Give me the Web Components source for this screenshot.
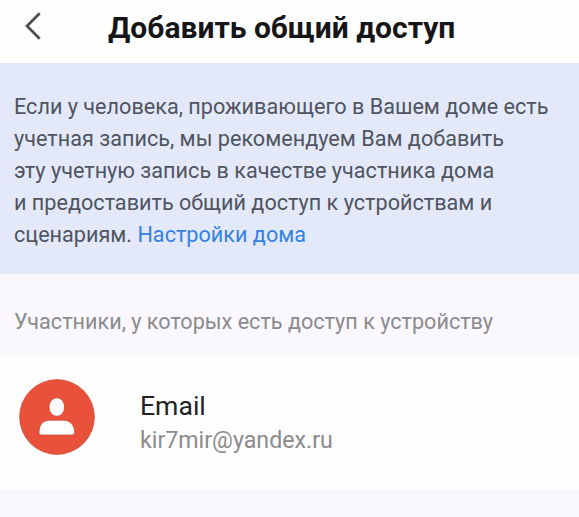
<!DOCTYPE html>
<html lang="ru">
<head>
<meta charset="utf-8">
<meta name="viewport" content="width=device-width, initial-scale=1">
<title>Добавить общий доступ</title>
<style>
  body{
    margin:0;
    background:#faf8fc;
    font-family:Roboto, "Liberation Sans", sans-serif;
  }
</style>
</head>
<body>
<share-page>
  <page-header slot="header">Добавить общий доступ</page-header>
  <info-banner>
    <text-line>Если у человека, проживающего в Вашем доме есть</text-line>
    <text-line>учетная запись, мы рекомендуем Вам добавить</text-line>
    <text-line>эту учетную запись в качестве участника дома</text-line>
    <text-line>и предоставить общий доступ к устройствам и</text-line>
    <text-line>сценариям. <home-link>Настройки дома</home-link></text-line>
  </info-banner>
  <section-title>Участники, у которых есть доступ к устройству</section-title>
  <member-row>
    <user-avatar slot="avatar"></user-avatar>
    <span slot="name">Email</span>
    <span slot="account">kir7mir@yandex.ru</span>
  </member-row>
</share-page>

<script>
class BaseElement extends HTMLElement{
  constructor(){
    super();
    this.attachShadow({mode:'open'});
  }
  getTemplate(){
    const content=document.createElement('template');
    content.innerHTML=`${this.getStyles()}${this.getMarkup()}`;
    return content;
  }
  getMarkup(){
    return `<slot></slot>`;
  }
  connectedCallback(){
    if(this.shadowRoot.childNodes.length) return;
    this.shadowRoot.appendChild(this.getTemplate().content.cloneNode(true));
  }
}

class SharePage extends BaseElement{
  getMarkup(){
    return `<slot name="header"></slot><main><slot></slot></main>`;
  }
  getStyles(){
    return `<style>
      :host{
        display:flex;
        flex-direction:column;
        min-height:517px;
      }
    </style>`;
  }
}

class PageHeader extends BaseElement{
  getMarkup(){
    return `
      <button aria-label="Назад">
        <svg width="18" height="30" viewBox="0 0 18 30">
          <path d="M15.7 2.2 L3 15 L15.7 27.8" fill="none" stroke="#4c4c4e" stroke-width="2.7"/>
        </svg>
      </button>
      <h1><slot></slot></h1>
    `;
  }
  getStyles(){
    return `<style>
      :host{
        display:flex;
        align-items:flex-start;
        box-sizing:border-box;
        height:63px;
        padding:11px 24px 0;
        background:#fefefe;
      }
      button{
        display:block;
        width:84px;
        padding:0;
        border:0;
        background:none;
        text-align:left;
      }
      svg{
        display:block;
      }
      h1{
        margin:0;
        font-size:30px;
        line-height:34px;
        font-weight:700;
        color:#161618;
        white-space:nowrap;
      }
    </style>`;
  }
}

class InfoBanner extends BaseElement{
  getStyles(){
    return `<style>
      :host{
        display:block;
        box-sizing:border-box;
        height:211px;
        padding:27.6px 14px 0;
        background:#e3e9f9;
        color:#50545f;
        font-size:21.63px;
        line-height:32.1px;
      }
    </style>`;
  }
}

class TextLine extends BaseElement{
  getStyles(){
    return `<style>
      :host{
        display:block;
        white-space:nowrap;
      }
    </style>`;
  }
}

class HomeLink extends BaseElement{
  getStyles(){
    return `<style>
      :host{
        display:inline;
        color:#3482e0;
        cursor:pointer;
      }
    </style>`;
  }
}

class SectionTitle extends BaseElement{
  getStyles(){
    return `<style>
      :host{
        display:block;
        box-sizing:border-box;
        height:83px;
        padding:34px 14px 0;
        color:#8b8a8d;
        font-size:21.62px;
        line-height:28px;
        white-space:nowrap;
      }
    </style>`;
  }
}

class MemberRow extends BaseElement{
  getMarkup(){
    return `
      <slot name="avatar"></slot>
      <div>
        <p class="name"><slot name="name"></slot></p>
        <p class="account"><slot name="account"></slot></p>
      </div>
    `;
  }
  getStyles(){
    return `<style>
      :host{
        display:flex;
        align-items:flex-start;
        gap:45px;
        box-sizing:border-box;
        height:133px;
        padding:22px 19px 0;
        background:#fefefe;
      }
      div{
        padding-top:10px;
      }
      p{
        margin:0;
        white-space:nowrap;
      }
      .name{
        font-size:26.6px;
        line-height:34px;
        color:#222224;
      }
      .account{
        font-size:23.2px;
        line-height:34px;
        color:#8b8b8d;
      }
    </style>`;
  }
}

class UserAvatar extends BaseElement{
  getMarkup(){
    return `
      <svg width="76" height="76" viewBox="0 0 76 76">
        <circle cx="38" cy="38" r="37.4" fill="#e9513a" stroke="#c9543f" stroke-width="0.8"/>
        <g fill="#fff" stroke="#c4452f" stroke-width="0.7">
          <ellipse cx="37.8" cy="28" rx="7.8" ry="9.2"/>
          <path d="M20 53.5 C20 46.5 23.5 41.2 31 41.2 H44 C51.5 41.2 55.6 46.5 55.6 53.5 Q55.6 56 53 56 H22.6 Q20 56 20 53.5 Z"/>
        </g>
      </svg>
    `;
  }
  getStyles(){
    return `<style>
      :host{
        display:block;
        width:76px;
        height:76px;
      }
      svg{
        display:block;
      }
    </style>`;
  }
}

customElements.define('share-page',SharePage);
customElements.define('page-header',PageHeader);
customElements.define('info-banner',InfoBanner);
customElements.define('text-line',TextLine);
customElements.define('home-link',HomeLink);
customElements.define('section-title',SectionTitle);
customElements.define('member-row',MemberRow);
customElements.define('user-avatar',UserAvatar);
</script>
</body>
</html>
